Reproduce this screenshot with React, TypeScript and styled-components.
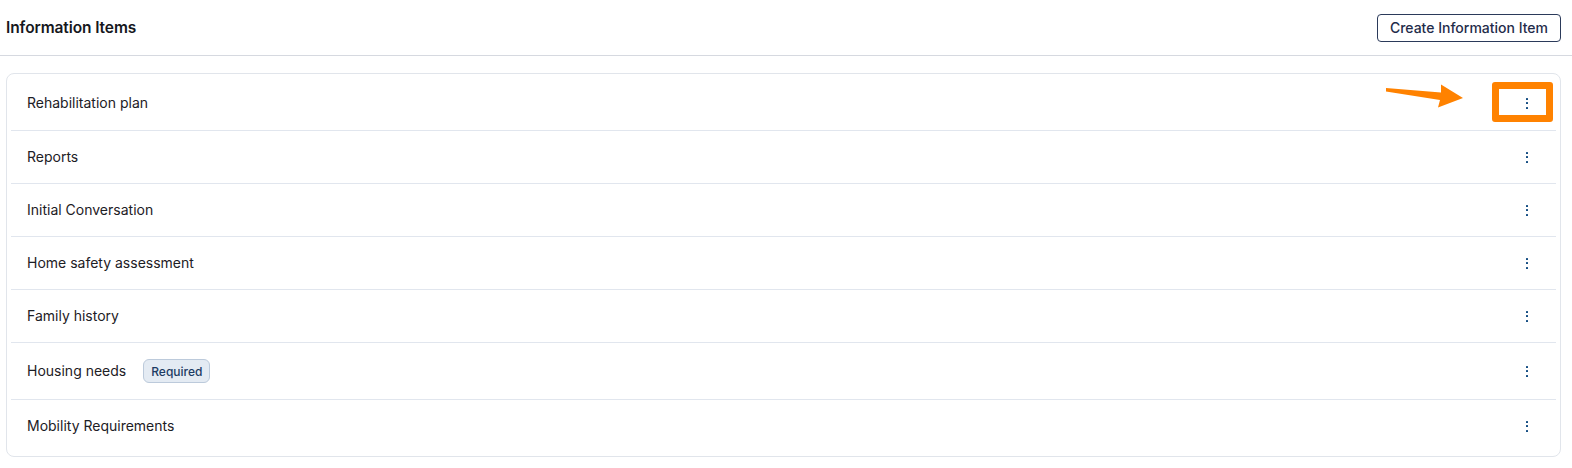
import React from "react";
import styled, { createGlobalStyle } from "styled-components";

const GlobalStyle = createGlobalStyle`
  * { box-sizing: border-box; }
  html, body { margin: 0; padding: 0; background: #ffffff; }
  body {
    font-family: Inter, "Noto Sans", "Liberation Sans", sans-serif;
    color: #1d2025;
    -webkit-font-smoothing: antialiased;
  }
`;

const Page = styled.div`
  position: relative;
  width: 1572px;
  min-height: 468px;
`;

const Header = styled.header`
  display: flex;
  align-items: center;
  justify-content: space-between;
  height: 56px;
  padding: 0 11px 0 6px;
  border-bottom: 1px solid #d6d9e0;
`;

const Title = styled.h1`
  margin: 0;
  font-size: 15.5px;
  font-weight: 600;
  color: #16181d;
  letter-spacing: -0.1px;
`;

const OutlineButton = styled.button`
  height: 28px;
  padding: 0 12px;
  white-space: nowrap;
  border: 1px solid #2b3a5a;
  border-radius: 4px;
  background: #ffffff;
  color: #1f2c4a;
  font-family: inherit;
  font-size: 14px;
  font-weight: 500;
  cursor: pointer;
`;

const Content = styled.main`
  padding: 17px 11px 0 6px;
`;

const Card = styled.section`
  border: 1px solid #e1e5eb;
  border-radius: 8px;
  padding: 0 4px;
`;

const Row = styled.div<{ $h: number }>`
  display: flex;
  align-items: center;
  height: ${(p) => p.$h}px;
  padding: 0 16px;
  border-bottom: 1px solid #e1e6ee;
  &:first-child {
    padding-top: 2px;
  }
  &:last-child {
    border-bottom: none;
    padding-bottom: 4px;
  }
`;

const Label = styled.span`
  font-size: 14px;
  color: #1d2025;
  margin-top: -2px;
`;

const Badge = styled.span`
  display: inline-flex;
  align-items: center;
  height: 24px;
  margin-left: 17px;
  padding: 0 7px;
  border: 1px solid #bccadb;
  border-radius: 6px;
  background: #e4ebf3;
  color: #1c3b63;
  font-size: 12px;
  font-weight: 500;
`;

const Spacer = styled.div`
  flex: 1;
`;

const KebabButton = styled.button`
  width: 28px;
  height: 28px;
  display: flex;
  flex-direction: column;
  align-items: center;
  justify-content: center;
  gap: 2.5px;
  padding: 0;
  margin-right: -1px;
  border: none;
  background: transparent;
  cursor: pointer;
`;

const Dot = styled.span`
  width: 2px;
  height: 2px;
  background: #0f4a80;
  border-radius: 0.5px;
`;

const Highlight = styled.div`
  position: absolute;
  left: 1492px;
  top: 82px;
  width: 61px;
  height: 40px;
  border: 7px solid #ff8200;
  border-radius: 3px;
  pointer-events: none;
`;

const ArrowSvg = styled.svg`
  position: absolute;
  left: 1380px;
  top: 80px;
  pointer-events: none;
`;

const items: { label: string; h: number; required?: boolean }[] = [
  { label: "Rehabilitation plan", h: 57 },
  { label: "Reports", h: 53 },
  { label: "Initial Conversation", h: 53 },
  { label: "Home safety assessment", h: 53 },
  { label: "Family history", h: 53 },
  { label: "Housing needs", h: 57, required: true },
  { label: "Mobility Requirements", h: 56 },
];

const Kebab = () => (
  <KebabButton aria-label="More actions">
    <Dot />
    <Dot />
    <Dot />
  </KebabButton>
);

export default function App() {
  return (
    <>
      <GlobalStyle />
      <Page>
        <Header>
          <Title>Information Items</Title>
          <OutlineButton>Create Information Item</OutlineButton>
        </Header>
        <Content>
          <Card>
            {items.map((it) => (
              <Row key={it.label} $h={it.h}>
                <Label>{it.label}</Label>
                {it.required && <Badge>Required</Badge>}
                <Spacer />
                <Kebab />
              </Row>
            ))}
          </Card>
        </Content>
        <ArrowSvg width="90" height="32" viewBox="0 0 90 32">
          <polygon
            points="6,8 61,12.5 61,4.5 83,18 58,27.5 60,20 6,11.5"
            fill="#ff8200"
          />
        </ArrowSvg>
        <Highlight />
      </Page>
    </>
  );
}
